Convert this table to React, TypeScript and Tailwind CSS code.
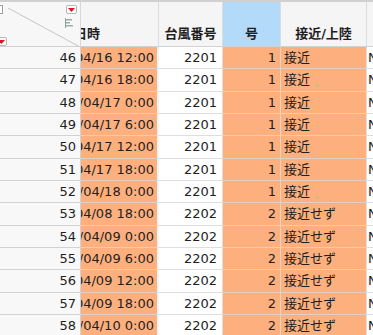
import React from "react";

const rows: [number, string, string, string, string][] = [
  [46, "2022/04/16 12:00", "2201", "1", "接近"],
  [47, "2022/04/16 18:00", "2201", "1", "接近"],
  [48, "2022/04/17 0:00", "2201", "1", "接近"],
  [49, "2022/04/17 6:00", "2201", "1", "接近"],
  [50, "2022/04/17 12:00", "2201", "1", "接近"],
  [51, "2022/04/17 18:00", "2201", "1", "接近"],
  [52, "2022/04/18 0:00", "2201", "1", "接近"],
  [53, "2022/04/08 18:00", "2202", "2", "接近せず"],
  [54, "2022/04/09 0:00", "2202", "2", "接近せず"],
  [55, "2022/04/09 6:00", "2202", "2", "接近せず"],
  [56, "2022/04/09 12:00", "2202", "2", "接近せず"],
  [57, "2022/04/09 18:00", "2202", "2", "接近せず"],
  [58, "2022/04/10 0:00", "2202", "2", "接近せず"],
];

function RedButton({ className }: { className: string }) {
  return (
    <div
      className={
        "absolute w-[11px] h-[9px] rounded-[2px] border border-[#b8b8b8] bg-white flex items-center justify-center " +
        className
      }
    >
      <svg width="7" height="4" viewBox="0 0 7 4">
        <polygon points="0,0 7,0 3.5,4" fill="#e0102a" />
      </svg>
    </div>
  );
}

export default function App() {
  return (
    <div
      className="w-[373px] h-[335px] overflow-hidden bg-white text-[13px] text-[#1e1e1e]"
      style={{ fontFamily: '"DejaVu Sans", "Noto Sans CJK JP", sans-serif' }}
    >
      <div className="h-[2px] bg-[#d0d0d0]" />
      {/* header */}
      <div className="flex h-[45px] border-b border-[#d2d2d2]">
        <div className="relative w-[81px] shrink-0 bg-[#f7f7f7] border-r border-[#d8d8d8] overflow-hidden">
          <svg className="absolute left-0 top-0" width="81" height="45">
            <line x1="8" y1="6" x2="80" y2="45" stroke="#c4c4c4" strokeWidth="1" />
          </svg>
          <div className="absolute left-[-8px] top-[3px] w-[11px] h-[9px] border border-[#a0a0a0] bg-white" />
          <RedButton className="left-[66px] top-[3px]" />
          <RedButton className="left-[-4px] top-[35px]" />
          <svg className="absolute left-[65px] top-[16px]" width="9" height="10" viewBox="0 0 9 10">
            <rect x="0" y="0" width="1" height="10" fill="#8aa0a0" />
            <rect x="1" y="1" width="6" height="1.5" fill="#9ab0a8" />
            <rect x="1" y="4" width="4" height="1.5" fill="#9ab0a8" />
            <rect x="1" y="7" width="7" height="1.5" fill="#9ab0a8" />
          </svg>
        </div>
        <div className="w-[78px] shrink-0 bg-[#f5f5f5] border-r border-[#dcdcdc] overflow-hidden flex items-end pb-[3px] font-bold">
          <span className="ml-[-7px] whitespace-nowrap">日時</span>
        </div>
        <div className="w-[64px] shrink-0 bg-[#f5f5f5] border-r border-[#dcdcdc] flex items-end justify-center pb-[3px] font-bold whitespace-nowrap">
          台風番号
        </div>
        <div className="w-[58px] shrink-0 bg-[#b4dafa] border-r border-[#dcdcdc] flex items-end justify-center pb-[3px] font-bold">
          号
        </div>
        <div className="w-[86px] shrink-0 bg-[#f5f5f5] border-r border-[#dcdcdc] flex items-end justify-center pb-[3px] font-bold whitespace-nowrap">
          接近/上陸
        </div>
        <div className="flex-1 bg-[#f5f5f5]" />
      </div>
      {/* body */}
      {rows.map(([n, date, num, go, st]) => (
        <div key={n} className="flex h-[22.35px]">
          <div className="w-[81px] shrink-0 bg-[#f8f8f8] border-r border-b border-[#d2d2d2] flex items-center justify-end pr-[4px]">
            {n}
          </div>
          <div className="w-[78px] shrink-0 bg-[#fdb07e] border-r-2 border-r-[#f4f4f4] border-b border-b-[#e6cfc0] overflow-hidden flex items-center justify-end pr-[3px] whitespace-nowrap">
            {date}
          </div>
          <div className="w-[64px] shrink-0 bg-white border-r border-b border-[#dedede] flex items-center justify-end pr-[5px]">
            {num}
          </div>
          <div className="w-[58px] shrink-0 bg-[#fdb07e] border-r border-b border-r-[#e8d6ca] border-b-[#e6cfc0] flex items-center justify-end pr-[4px]">
            {go}
          </div>
          <div className="w-[86px] shrink-0 bg-[#fdb07e] border-r border-b border-r-[#dedede] border-b-[#e6cfc0] flex items-center pl-[3px] whitespace-nowrap">
            {st}
          </div>
          <div className="flex-1 bg-white border-b border-[#dedede] flex items-center pl-[1px]">
            N
          </div>
        </div>
      ))}
    </div>
  );
}
